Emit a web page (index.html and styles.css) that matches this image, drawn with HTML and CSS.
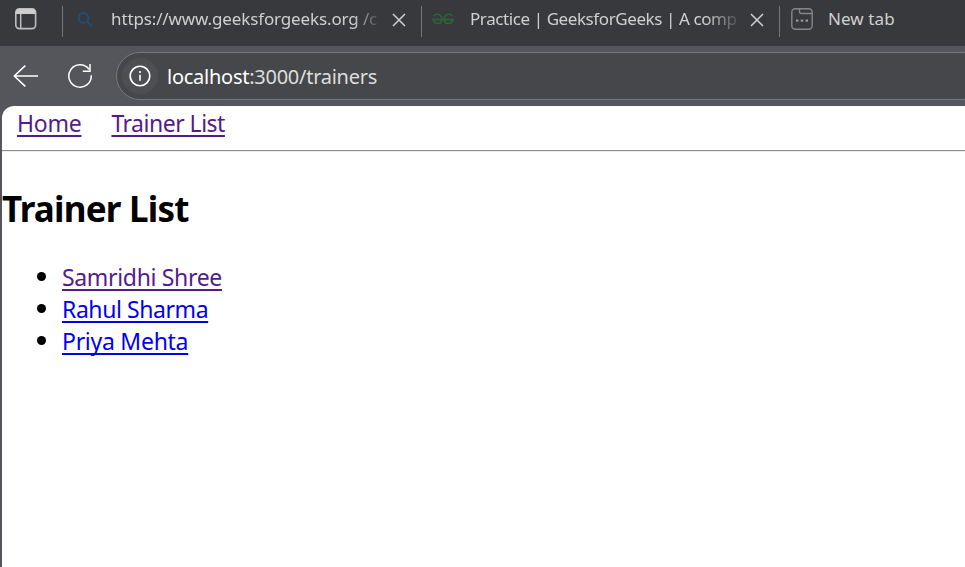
FILE: index.html
```html
<!DOCTYPE html>
<html lang="en">
<head>
<meta charset="utf-8">
<title>Trainers</title>
<link rel="stylesheet" href="styles.css">
</head>
<body>
<div class="tabs">
  <svg class="actions" width="24" height="24" viewBox="0 0 24 24"><rect x="1.8" y="1.8" width="19.8" height="19.8" rx="3.5" fill="none" stroke="#bdbdbd" stroke-width="1.6"/><path d="M2 7V5q0-3 3-3h13.4q3 0 3 3v2z" fill="#cecece"/><path d="M6.7 7v14" stroke="#bdbdbd" stroke-width="1.5"/></svg>
  <div class="tab first">
    <svg class="search" width="16" height="16" viewBox="0 0 16 16" fill="none" stroke="#1f4e79" stroke-width="2"><circle cx="6.5" cy="6" r="5"/><path d="M10 9.6l5 4.8"/></svg>
    <span class="title url">https://www.geeksforgeeks.org /c</span>
    <svg class="close" width="14" height="14" viewBox="0 0 14 14" stroke="#d0d0d0" stroke-width="1.5"><path d="M1 1l12 12M13 1L1 13"/></svg>
  </div>
  <div class="tab second">
    <svg class="gfg" width="22" height="13" viewBox="0 0 22 13" fill="none" stroke="#2b6439" stroke-width="1.6"><path d="M1.5 3C4 .2 9.800 .8 9.800 6.2S3 12 1 6.600h20c-2 5.400-8.800 5-8.800-.4S18 .2 20.500 3"/></svg>
    <span class="title practice">Practice | GeeksforGeeks | A comp</span>
    <svg class="close" width="14" height="14" viewBox="0 0 14 14" stroke="#d0d0d0" stroke-width="1.5"><path d="M1 1l12 12M13 1L1 13"/></svg>
  </div>
  <div class="tab third">
    <svg class="newicon" width="22" height="22" viewBox="0 0 22 22" fill="none" stroke="#858689" stroke-width="1.4"><rect x=".8" y=".8" width="20.4" height="20.4" rx="3.5"/><path d="M8.5 1v2.5q0 2 2 2H21"/><path d="M5 12.7h2.4M9.800 12.7h2.4M14.6 12.7H17" stroke="#999" stroke-width="2.2"/></svg>
    <span class="title new">New tab</span>
  </div>
</div>
<div class="toolbar">
  <svg class="back" width="26" height="24" viewBox="0 0 26 24" fill="none" stroke="#fff" stroke-width="1.5"><path d="M12.3 1.6L1.3 12l11 10.4M1.3 12H25"/></svg>
  <svg class="reload" width="26" height="26" viewBox="0 0 26 26" fill="none" stroke="#fff" stroke-width="1.5"><path d="M24.2 12.2A11.2 11.2 0 1 1 21.9 6.2M23 1v7.2h-7.2"/></svg>
  <div class="address">
    <span class="info"><svg width="22" height="22" viewBox="0 0 22 22"><circle cx="11" cy="11" r="9.8" fill="none" stroke="#fff" stroke-width="1.6"/><path d="M11 9.8v6" stroke="#fff" stroke-width="1.6"/><circle cx="11" cy="7" r="1.1" fill="#fff"/></svg></span>
    <span class="location"><b>localhost</b>:3000/trainers</span>
  </div>
</div>
<main class="page">
  <nav><a class="home">Home</a><a class="list-link">Trainer List</a></nav>
  <hr>
  <h2>Trainer List</h2>
  <ul>
    <li><a class="samridhi">Samridhi Shree</a></li>
    <li><a class="rahul unvisited">Rahul Sharma</a></li>
    <li><a class="priya unvisited">Priya Mehta</a></li>
  </ul>
</main>
</body>
</html>
```
FILE: styles.css
```css
* { box-sizing: border-box; }
body { margin: 0; height: 567px; overflow: hidden; display: flex; flex-direction: column; background: #55565b; font-family: "Noto Sans", "Open Sans", sans-serif; }
svg { flex: none; display: block; }
.tabs { height: 46px; flex: none; display: flex; background: #38393c; padding-left: 14px; }
.actions { margin: 7px 24px 0 0; }
.tab { flex: none; height: 31px; margin-top: 6px; border-left: 1.5px solid #77787a; display: flex; color: #d0d0d0; }
.first { width: 359px; }
.second { width: 358px; }
.search { margin: 6px 0 0 14px; }
.title { font-size: 17px; line-height: 24px; height: 28px; white-space: nowrap; margin-top: 1px; flex: none; }
.url { width: 269px; margin-left: 18px; margin-right: 1px; letter-spacing: -0.13px; -webkit-mask-image: linear-gradient(90deg, #000 242px, transparent 271px); mask-image: linear-gradient(90deg, #000 242px, transparent 271px); }
.practice { width: 269px; margin-left: 16px; letter-spacing: -0.41px; -webkit-mask-image: linear-gradient(90deg, #000 235px, transparent 273px); mask-image: linear-gradient(90deg, #000 235px, transparent 273px); }
.close { margin: 7px 0 0 11px; }
.gfg { margin: 7px 0 0 10px; }
.newicon { margin: 2px 0 0 11px; }
.new { margin-left: 15px; letter-spacing: 0.1px; }
.toolbar { height: 60px; flex: none; display: flex; align-items: center; padding-left: 13px; }
.reload { margin-left: 28px; }
.address { flex: none; width: 870px; height: 48px; margin-left: 23px; border: 1.5px solid #77787a; border-radius: 24px; background: #46474a; display: flex; align-items: center; padding-left: 5px; }
.info { width: 36px; height: 36px; border-radius: 50%; background: #4e4f52; display: grid; place-items: center; }
.location { margin: 2px 0 0 9px; font-size: 20px; line-height: 28px; letter-spacing: -0.26px; color: #dedede; white-space: nowrap; }
.location b { font-weight: 400; color: #fff; }
.page { flex: 1; margin-left: 2px; background: #fff; border-top-left-radius: 12px; font-size: 23px; line-height: 32px; }
nav { height: 44px; padding: 1px 0 0 15px; display: flex; gap: 30px; }
a { color: #551a8b; text-decoration: underline; text-decoration-thickness: 2px; text-underline-offset: 3px; text-decoration-skip-ink: none; white-space: nowrap; }
.unvisited { color: #0000ee; }
.home { letter-spacing: -0.25px; }
.list-link { letter-spacing: -0.5px; }
.samridhi { letter-spacing: -0.33px; }
.rahul { letter-spacing: -0.42px; }
.priya { letter-spacing: -0.27px; }
hr { margin: 0; height: 2px; border: 0; border-top: 1px solid #8c8c8c; border-bottom: 1px solid #eee; }
h2 { margin: 33px 0 27px; font-size: 35px; line-height: 48px; letter-spacing: -0.77px; white-space: nowrap; }
ul { margin: 0; padding-left: 60px; }
li { height: 32px; }
li::marker { font-size: 25px; }
```
